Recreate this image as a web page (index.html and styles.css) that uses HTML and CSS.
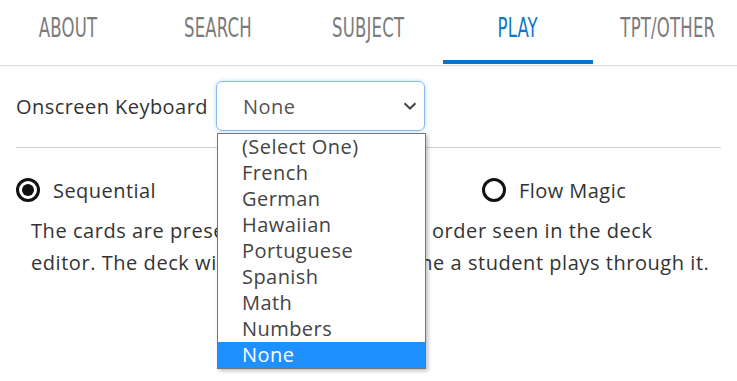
FILE: index.html
```html
<!DOCTYPE html>
<html>
<head>
<meta charset="utf-8">
<link rel="stylesheet" href="styles.css">
</head>
<body>
<nav class="tabs">
  <div class="tab"><span class="tab-label">ABOUT</span></div>
  <div class="tab"><span class="tab-label">SEARCH</span></div>
  <div class="tab"><span class="tab-label">SUBJECT</span></div>
  <div class="tab active"><span class="tab-label">PLAY</span></div>
  <div class="tab"><span class="tab-label">TPT/OTHER</span></div>
</nav>
<main class="content">
  <div class="kb-row">
    <label class="kb-label">Onscreen Keyboard</label>
    <div class="select-wrap">
      <div class="select">
        <span class="select-value">None</span>
        <svg class="chevron" width="14" height="8" viewBox="0 0 14 8"><path d="M1.5 1.2 L7 6.5 L12.5 1.2" fill="none" stroke="#444" stroke-width="2"/></svg>
      </div>
      <ul class="options">
        <li>(Select One)</li>
        <li>French</li>
        <li>German</li>
        <li>Hawaiian</li>
        <li>Portuguese</li>
        <li>Spanish</li>
        <li>Math</li>
        <li>Numbers</li>
        <li class="selected">None</li>
      </ul>
    </div>
  </div>
  <hr class="divider">
  <div class="modes">
    <div class="mode"><span class="radio checked"></span><span>Sequential</span></div>
    <div class="mode"><span class="radio"></span><span>Random</span></div>
    <div class="mode"><span class="radio"></span><span>Flow Magic</span></div>
  </div>
  <p class="desc">The cards are presented in the standard order seen in the deck<br>editor. The deck will be in order each time a student plays through it.</p>
</main>
</body>
</html>
```
FILE: styles.css
```css
html, body { margin: 0; padding: 0; background: #fff; }
body { font-family: "Open Sans", "Liberation Sans", sans-serif; color: #333; overflow: hidden; width: 737px; height: 381px; letter-spacing: 0.45px; }

.tabs {
  display: flex;
  margin-left: -7px;
  height: 65px;
  border-bottom: 1px solid #dcdcdc;
  letter-spacing: 0;
}
.tab {
  flex: 0 0 150px;
  display: flex;
  justify-content: center;
  padding-top: 13px;
  height: 51px;
  box-sizing: content-box;
}
.tab.active { border-bottom: 4px solid #0a74c9; height: 47px; }
.tab-label {
  display: inline-block;
  font-family: "DejaVu Sans Condensed", "Liberation Sans", sans-serif;
  font-size: 27px;
  line-height: 30px;
  color: #7b7b7b;
  transform: scaleX(0.68);
  letter-spacing: 0.3px;
}
.tab.active .tab-label { color: #0e77c9; }

.content { padding: 15px 16px 0 16px; }
.kb-row { display: flex; align-items: center; height: 50px; }
.kb-label { font-size: 20px; color: #333; margin-right: 8px; }
.select-wrap { position: relative; }
.select {
  width: 209px;
  height: 50px;
  box-sizing: border-box;
  border: 1px solid #86bbef;
  border-radius: 6px;
  box-shadow: 0 0 4px rgba(100, 170, 240, 0.45);
  display: flex;
  align-items: center;
  justify-content: space-between;
  padding: 0 7px 0 26px;
}
.select-value { font-size: 20px; color: #555; }
.options {
  position: absolute;
  left: 1px;
  top: 52px;
  width: 207px;
  margin: 0;
  padding: 0;
  list-style: none;
  background: #fff;
  border: 1px solid #767676;
  box-shadow: 2px 2px 4px rgba(0,0,0,0.25);
  z-index: 5;
}
.options li {
  height: 26px;
  line-height: 26px;
  padding-left: 24px;
  font-size: 20px;
  color: #444;
}
.options li.selected { background: #1e90ff; color: #fff; }

.divider { border: 0; border-top: 1px solid #cfcfcf; margin: 16px 0 0 0; }
.modes { display: flex; margin-top: 29px; height: 26px; align-items: center; }
.mode { display: flex; align-items: center; gap: 13px; font-size: 20px; color: #333; width: 233px; }
.radio {
  width: 24px; height: 24px; box-sizing: border-box; flex: none;
  border: 3px solid #111; border-radius: 50%;
  display: inline-flex; align-items: center; justify-content: center;
}
.radio.checked::after { content: ""; width: 12px; height: 12px; border-radius: 50%; background: #111; }
.desc {
  margin: 12px 0 0 15px;
  font-size: 20px;
  line-height: 32px;
  color: #333;
  white-space: nowrap;
  letter-spacing: 0.55px;
}
```
